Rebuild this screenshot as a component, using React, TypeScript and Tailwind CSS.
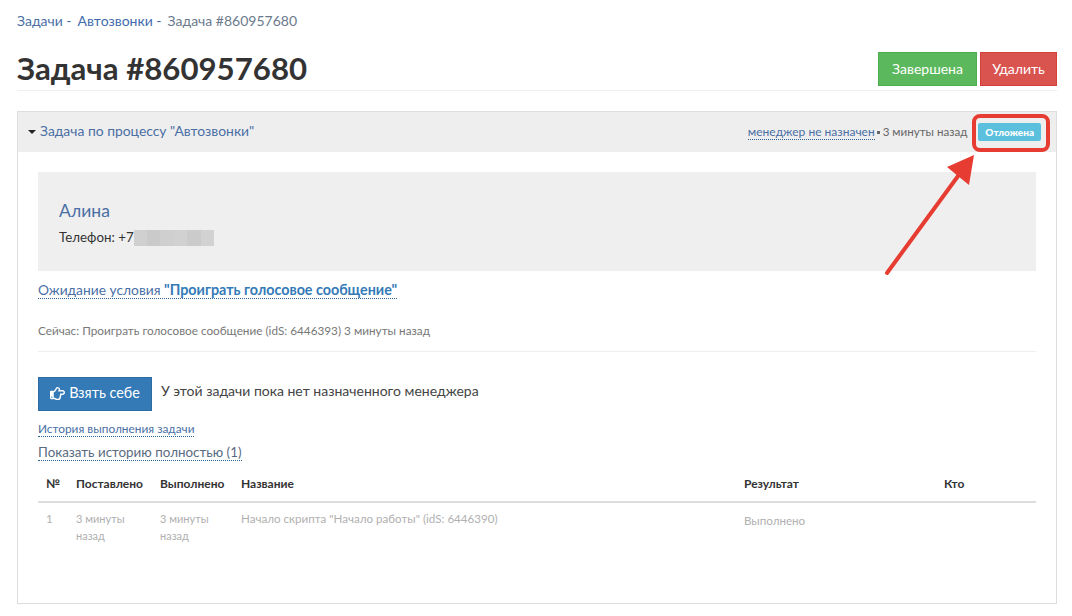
import { FaRegHandPointRight } from 'react-icons/fa';

const FONT = "font-['Lato','Open_Sans',sans-serif]";

const BLUR_BLOCKS = ['bg-[#d0d0d0]', 'bg-[#cacaca]', 'bg-[#cfcfcf]', 'bg-[#d1d1d1]', 'bg-[#cbcbcb]', 'bg-[#d2d2d2]'];

const COLUMNS = [
  { title: '№', width: 'w-[30px]' },
  { title: 'Поставлено', width: 'w-[84px]' },
  { title: 'Выполнено', width: 'w-[81px]' },
  { title: 'Название', width: 'w-[503px]' },
  { title: 'Результат', width: 'w-[200px]' },
  { title: 'Кто', width: 'flex-1' },
];

function Annotation() {
  return (
    <svg className="absolute left-0 top-0 pointer-events-none" width="1072" height="616" viewBox="0 0 1072 616" fill="none">
      <rect x="974" y="116" width="74" height="34" rx="6" stroke="#e63c31" strokeWidth="4" />
      <path d="M887 273L961 172" stroke="#e63c31" strokeWidth="4" strokeLinecap="round" />
      <path d="M974 155L947 167L969 185Z" fill="#e63c31" />
    </svg>
  );
}

export default function App() {
  return (
    <div className={`relative h-[616px] w-[1072px] overflow-hidden bg-white pl-[17px] pr-[15px] pt-[12px] text-[#333] ${FONT}`}>
      <div className="flex h-[18px] items-center text-[14px] leading-[18px]">
        <span className="text-[#4a6fa5]">Задачи -</span>
        <span className="ml-[6px] text-[#3f6cad]">Автозвонки -</span>
        <span className="ml-[6px] text-[#6b7a8c]">Задача #860957680</span>
      </div>

      <div className="mt-[22px] flex h-[39px] items-start justify-between border-b border-[#eeeeee]">
        <h1 className="text-[31.2px] font-bold leading-[32px] text-[#333]">Задача #860957680</h1>
        <div className="flex gap-[3px]">
          <button className="h-[34px] w-[99px] border border-[#4cae4c] bg-[#5cb85c] pb-[2px] text-[14px] text-white">Завершена</button>
          <button className="h-[34px] w-[77px] border border-[#d43f3a] bg-[#d9534f] pb-[2px] text-[14px] text-white">Удалить</button>
        </div>
      </div>

      <div className="mt-[20px] h-[493px] border border-[#dddddd]">
        <div className="flex h-[40px] items-center justify-between bg-[#eeeeee] pl-[10px] pr-[15px]">
          <div className="flex items-center gap-[4px] pb-[2px] text-[13.9px] text-[#4a6fa5]">
            <span className="mt-[2px] h-0 w-0 border-x-[4px] border-t-[4px] border-x-transparent border-t-[#222]" />
            Задача по процессу "Автозвонки"
          </div>
          <div className="flex items-center text-[12px]">
            <span className="border-b border-dotted border-[#2a6496] leading-[15px] text-[#4a6fa5]">менеджер не назначен</span>
            <span className="ml-[2px] h-[3px] w-[3px] bg-[#666]" />
            <span className="ml-[3px] text-[11.6px] text-[#666]">3 минуты назад</span>
            <span className="ml-[11px] rounded-[2px] bg-[#5bc0de] px-[7px] py-[2px] text-[10px] font-black leading-[14px] text-white">Отложена</span>
          </div>
        </div>

        <div className="px-[20px] pt-[20px]">
          <div className="h-[99px] bg-[#efefef] pl-[21px] pt-[29px]">
            <div className="text-[17.5px] leading-[20px] text-[#4a6fa5]">Алина</div>
            <div className="mt-[9px] flex h-[16px] items-center text-[13.3px] text-[#333]">
              Телефон: +7
              <span className="flex h-[16px]">
                {BLUR_BLOCKS.map((c, i) => (
                  <span key={i} className={`h-full w-[13.4px] ${c}`} />
                ))}
              </span>
            </div>
          </div>

          <div className="mt-[10px] inline-block border-b border-dotted border-[#2a6496] text-[13.8px] leading-[17px] text-[#4a6fa5]">
            Ожидание условия <b className="text-[14.3px] text-[#337ab7]">"Проиграть голосовое сообщение"</b>
          </div>

          <div className="mt-[22px] border-b border-[#eeeeee] pb-[12px] text-[11.75px] leading-[16px] text-[#777]">
            Сейчас: Проиграть голосовое сообщение (idS: 6446393) 3 минуты назад
          </div>

          <div className="mt-[25px] flex items-start">
            <button className="flex h-[34px] w-[114px] items-center justify-center gap-[4px] border border-[#2e6da4] bg-[#337ab7] pb-[2px] text-[14.4px] text-white">
              <FaRegHandPointRight size={15} />
              Взять себе
            </button>
            <span className="ml-[9px] mt-[5px] text-[14px] leading-[18px] text-[#444]">У этой задачи пока нет назначенного менеджера</span>
          </div>

          <div className="mt-[4px]">
            <span className="inline-block border-b border-dotted border-[#2a6496] text-[11.85px] leading-[15px] text-[#4a6fa5]">История выполнения задачи</span>
          </div>
          <div className="mt-0">
            <span className="inline-block border-b border-dotted border-[#2a6496] text-[13.4px] leading-[16px] text-[#5a6b80]">Показать историю полностью (1)</span>
          </div>

          <div className="mt-[6px] flex h-[34px] items-center border-b-2 border-[#dddddd] pb-[2px] pl-[8px] text-[12px] font-bold text-[#333]">
            {COLUMNS.map((col) => (
              <div key={col.title} className={col.width}>{col.title}</div>
            ))}
          </div>
          <div className="flex pl-[8px] pt-[7px] text-[11.6px] leading-[17px] text-[#b0b0b0]">
            <div className="w-[30px]">1</div>
            <div className="w-[84px] text-[11px]">3 минуты<br />назад</div>
            <div className="w-[81px] text-[11px]">3 минуты<br />назад</div>
            <div className="w-[503px]">Начало скрипта "Начало работы" (idS: 6446390)</div>
            <div className="mt-[2px] w-[200px]">Выполнено</div>
          </div>
        </div>
      </div>

      <Annotation />
    </div>
  );
}
